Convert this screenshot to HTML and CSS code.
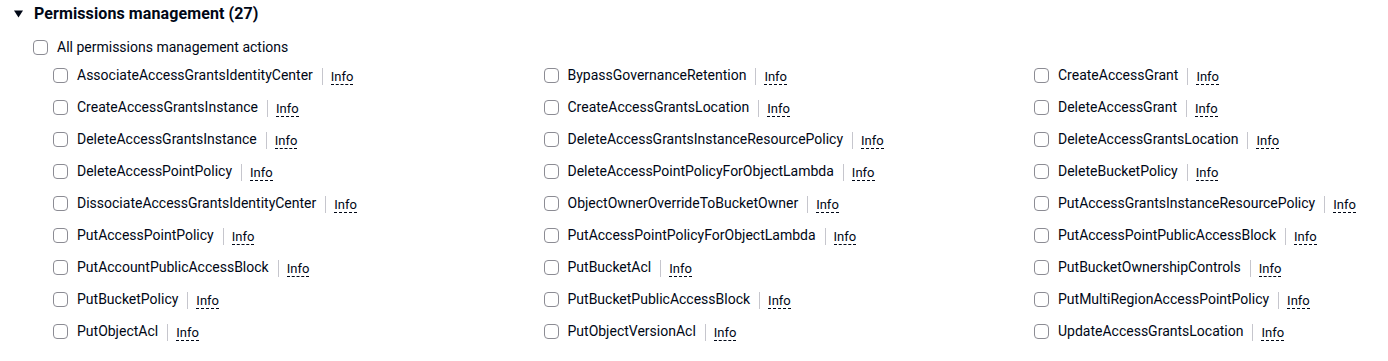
FILE: index.html
```html
<!DOCTYPE html>
<html lang="en">

<head>
    <meta charset="UTF-8">
    <title>Permissions management</title>
    <link rel="stylesheet" href="styles.css">
</head>

<body>
    <div class="section">
        <div class="section-header">
            <svg class="caret" width="9" height="8" viewBox="0 0 9 8"><path d="M0 0.5 H9 L4.5 7.5 Z" fill="#000716" /></svg>
            <span class="section-title">Permissions management (27)</span>
        </div>

        <label class="all-row">
            <span class="checkbox"></span>
            <span class="label-text">All permissions management actions</span>
        </label>

        <div class="actions-grid">
            <div class="action"><span class="checkbox"></span><span class="label-text">AssociateAccessGrantsIdentityCenter</span><span class="info">Info</span></div>
            <div class="action"><span class="checkbox"></span><span class="label-text">BypassGovernanceRetention</span><span class="info">Info</span></div>
            <div class="action"><span class="checkbox"></span><span class="label-text">CreateAccessGrant</span><span class="info">Info</span></div>

            <div class="action"><span class="checkbox"></span><span class="label-text">CreateAccessGrantsInstance</span><span class="info">Info</span></div>
            <div class="action"><span class="checkbox"></span><span class="label-text">CreateAccessGrantsLocation</span><span class="info">Info</span></div>
            <div class="action"><span class="checkbox"></span><span class="label-text">DeleteAccessGrant</span><span class="info">Info</span></div>

            <div class="action"><span class="checkbox"></span><span class="label-text">DeleteAccessGrantsInstance</span><span class="info">Info</span></div>
            <div class="action"><span class="checkbox"></span><span class="label-text">DeleteAccessGrantsInstanceResourcePolicy</span><span class="info">Info</span></div>
            <div class="action"><span class="checkbox"></span><span class="label-text">DeleteAccessGrantsLocation</span><span class="info">Info</span></div>

            <div class="action"><span class="checkbox"></span><span class="label-text">DeleteAccessPointPolicy</span><span class="info">Info</span></div>
            <div class="action"><span class="checkbox"></span><span class="label-text">DeleteAccessPointPolicyForObjectLambda</span><span class="info">Info</span></div>
            <div class="action"><span class="checkbox"></span><span class="label-text">DeleteBucketPolicy</span><span class="info">Info</span></div>

            <div class="action"><span class="checkbox"></span><span class="label-text">DissociateAccessGrantsIdentityCenter</span><span class="info">Info</span></div>
            <div class="action"><span class="checkbox"></span><span class="label-text">ObjectOwnerOverrideToBucketOwner</span><span class="info">Info</span></div>
            <div class="action"><span class="checkbox"></span><span class="label-text">PutAccessGrantsInstanceResourcePolicy</span><span class="info">Info</span></div>

            <div class="action"><span class="checkbox"></span><span class="label-text">PutAccessPointPolicy</span><span class="info">Info</span></div>
            <div class="action"><span class="checkbox"></span><span class="label-text">PutAccessPointPolicyForObjectLambda</span><span class="info">Info</span></div>
            <div class="action"><span class="checkbox"></span><span class="label-text">PutAccessPointPublicAccessBlock</span><span class="info">Info</span></div>

            <div class="action"><span class="checkbox"></span><span class="label-text">PutAccountPublicAccessBlock</span><span class="info">Info</span></div>
            <div class="action"><span class="checkbox"></span><span class="label-text">PutBucketAcl</span><span class="info">Info</span></div>
            <div class="action"><span class="checkbox"></span><span class="label-text">PutBucketOwnershipControls</span><span class="info">Info</span></div>

            <div class="action"><span class="checkbox"></span><span class="label-text">PutBucketPolicy</span><span class="info">Info</span></div>
            <div class="action"><span class="checkbox"></span><span class="label-text">PutBucketPublicAccessBlock</span><span class="info">Info</span></div>
            <div class="action"><span class="checkbox"></span><span class="label-text">PutMultiRegionAccessPointPolicy</span><span class="info">Info</span></div>

            <div class="action"><span class="checkbox"></span><span class="label-text">PutObjectAcl</span><span class="info">Info</span></div>
            <div class="action"><span class="checkbox"></span><span class="label-text">PutObjectVersionAcl</span><span class="info">Info</span></div>
            <div class="action"><span class="checkbox"></span><span class="label-text">UpdateAccessGrantsLocation</span><span class="info">Info</span></div>
        </div>
    </div>
</body>

</html>
```

FILE: styles.css
```css
* {
    margin: 0;
    padding: 0;
    box-sizing: border-box;
}

body {
    font-family: Roboto, 'Noto Sans', sans-serif;
    font-size: 14px;
    color: #000716;
    background-color: #ffffff;
    overflow: hidden;
}

.section-header {
    display: flex;
    align-items: center;
    height: 27px;
    padding-left: 14px;
}

.caret {
    margin-right: 11px;
}

.section-title {
    font-size: 16px;
    font-weight: bold;
    letter-spacing: 0.1px;
}

.all-row {
    display: flex;
    align-items: center;
    height: 24px;
    margin-top: 8px;
    margin-left: 33px;
}

.checkbox {
    flex: none;
    width: 15px;
    height: 15px;
    border: 1.5px solid #8c8c94;
    border-radius: 4px;
    margin-right: 9px;
}

.label-text {
    white-space: nowrap;
}

.actions-grid {
    display: grid;
    grid-template-columns: 490.5px 490.5px 1fr;
    grid-auto-rows: 32px;
    margin-left: 53px;
}

.action {
    display: flex;
    align-items: center;
}

.info {
    font-size: 13px;
    margin-left: 9px;
    padding-left: 8px;
    border-left: 1px solid #c6c6cd;
    line-height: 18px;
    position: relative;
    top: 1px;
}

.info::after {
    content: '';
    display: block;
    border-bottom: 1px dashed #000716;
    margin-top: -2px;
}
```
